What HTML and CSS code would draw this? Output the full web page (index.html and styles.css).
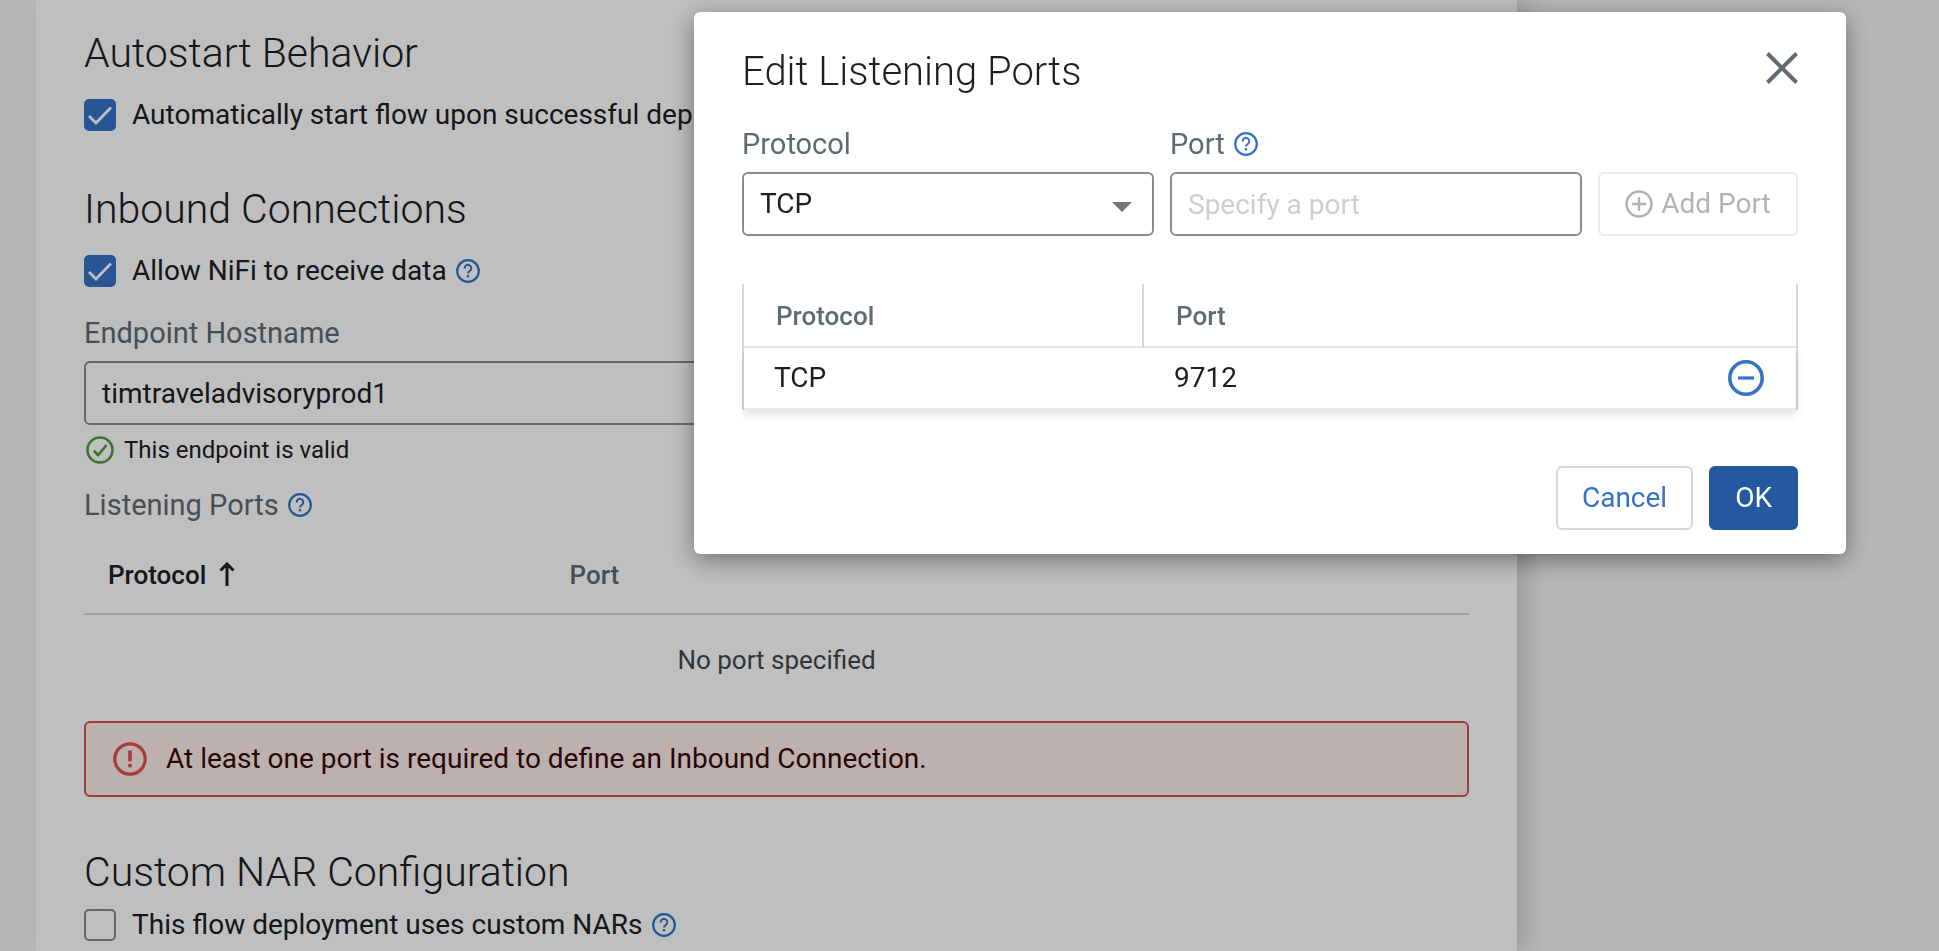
FILE: index.html
```html
<!DOCTYPE html>
<html lang="en">
<head>
<meta charset="utf-8">
<meta name="viewport" content="width=device-width, initial-scale=1">
<title>Edit Listening Ports</title>
<link rel="stylesheet" href="styles.css">
</head>
<body>
<svg class="sprite" width="0" height="0" aria-hidden="true">
  <symbol id="help" viewBox="0 0 24 24">
    <circle cx="12" cy="12" r="10.8" fill="none" stroke="currentColor" stroke-width="2.2"/>
    <path d="M8.700 9.600a3.300 3.300 0 1 1 5.300 2.200c-1.300 1-2 1.400-2 2.700" fill="none" stroke="currentColor" stroke-width="2"/>
    <circle cx="12" cy="17.300" r="1.300" fill="currentColor"/>
  </symbol>
  <symbol id="tick" viewBox="0 0 32 32">
    <path d="M5 17l7 7L27 8.500" fill="none" stroke="currentColor" stroke-width="2.800"/>
  </symbol>
</svg>

<main class="panel">
  <section class="section">
    <h2 class="heading">Autostart Behavior</h2>
    <label class="check">
      <span class="check-box"><input class="check-input" type="checkbox" checked><svg class="check-mark"><use href="#tick"/></svg></span>
      <span class="check-text">Automatically start flow upon successful deployment</span>
    </label>
  </section>

  <section class="section">
    <h2 class="heading">Inbound Connections</h2>
    <div class="line">
      <label class="check">
        <span class="check-box"><input class="check-input" type="checkbox" checked><svg class="check-mark"><use href="#tick"/></svg></span>
        <span class="check-text">Allow NiFi to receive data</span>
      </label>
      <svg class="help"><use href="#help"/></svg>
    </div>
    <div class="field endpoint">
      <label class="label" for="hostname">Endpoint Hostname</label>
      <input class="control" id="hostname" type="text" value="timtraveladvisoryprod1">
    </div>
    <p class="hint">
      <svg class="hint-icon" viewBox="0 0 28 28"><circle cx="14" cy="14" r="12.500" fill="none" stroke="currentColor" stroke-width="2.600"/><path d="M7.800 14.800l4.400 4.200L20.500 9" fill="none" stroke="currentColor" stroke-width="2.600"/></svg>
      <span>This endpoint is valid</span>
    </p>
    <div class="line">
      <span class="label">Listening Ports</span>
      <svg class="help"><use href="#help"/></svg>
    </div>
    <table class="ports">
      <thead>
        <tr>
          <th class="ports-head sorted" scope="col">Protocol<svg class="sort" viewBox="0 0 16 24"><path d="M8 24V2M1.500 8.500L8 2l6.500 6.500" fill="none" stroke="currentColor" stroke-width="3"/></svg></th>
          <th class="ports-head" scope="col">Port</th>
        </tr>
      </thead>
      <tbody>
        <tr><td class="ports-empty" colspan="2">No port specified</td></tr>
      </tbody>
    </table>
    <div class="alert" role="alert">
      <svg class="alert-icon" viewBox="0 0 34 34"><circle cx="17" cy="17" r="15.200" fill="none" stroke="currentColor" stroke-width="3.200"/><path d="M15.200 8.500h3.600v10.800h-3.600z" fill="currentColor"/><circle cx="17" cy="23.600" r="2.100" fill="currentColor"/></svg>
      <span>At least one port is required to define an Inbound Connection.</span>
    </div>
  </section>

  <section class="section section-nar">
    <h2 class="heading">Custom NAR Configuration</h2>
    <div class="line">
      <label class="check">
        <span class="check-box"><input class="check-input" type="checkbox"><svg class="check-mark"><use href="#tick"/></svg></span>
        <span class="check-text">This flow deployment uses custom NARs</span>
      </label>
      <svg class="help"><use href="#help"/></svg>
    </div>
  </section>
</main>

<div class="backdrop">
  <div class="dialog" role="dialog" aria-modal="true" aria-labelledby="dialog-title">
    <header class="dialog-head">
      <h1 class="heading" id="dialog-title">Edit Listening Ports</h1>
      <button class="close" type="button" aria-label="Close">
        <svg class="close-icon" viewBox="0 0 32 32"><path d="M1.500 1.500l29 29M30.500 1.500l-29 29" stroke="currentColor" stroke-width="4"/></svg>
      </button>
    </header>

    <form class="form">
      <div class="field">
        <label class="label" for="protocol">Protocol</label>
        <div class="select">
          <select class="control" id="protocol"><option>TCP</option><option>UDP</option></select>
          <svg class="caret" viewBox="0 0 20 10"><path d="M0 0h20L10 10z" fill="currentColor"/></svg>
        </div>
      </div>
      <div class="field">
        <div class="line">
          <label class="label" for="port">Port</label>
          <svg class="help"><use href="#help"/></svg>
        </div>
        <input class="control" id="port" type="text" placeholder="Specify a port">
      </div>
      <button class="button add" type="button" disabled>
        <svg class="add-icon" viewBox="0 0 28 28"><path d="M14 7v14M7 14h14" stroke="currentColor" stroke-width="2.400"/><circle cx="14" cy="14" r="12.500" fill="none" stroke="currentColor" stroke-width="2.600"/></svg>
        Add Port
      </button>
    </form>

    <table class="list">
      <thead>
        <tr>
          <th class="list-head" scope="col">Protocol</th>
          <th class="list-head" scope="col">Port</th>
        </tr>
      </thead>
      <tbody>
        <tr class="list-row">
          <td class="list-cell">TCP</td>
          <td class="list-cell">
            <div class="list-port">
              9712
              <button class="remove" type="button" aria-label="Remove port 9712">
                <svg class="remove-icon" viewBox="0 0 36 36"><circle cx="18" cy="18" r="16.200" fill="none" stroke="currentColor" stroke-width="3.600"/><path d="M10 18h16" stroke="currentColor" stroke-width="3.200"/></svg>
              </button>
            </div>
          </td>
        </tr>
      </tbody>
    </table>

    <footer class="dialog-foot">
      <button class="button cancel" type="button">Cancel</button>
      <button class="button ok" type="button">OK</button>
    </footer>
  </div>
</div>
</body>
</html>
```
FILE: styles.css
```css
* { box-sizing: border-box; }

:root {
  --text: #1b2025;
  --muted: #5f6a72;
  --blue: #3472c8;
  --outline: #868c92;
}

body {
  margin: 0;
  background: #f5f5f5;
  color: var(--text);
  font: 400 28px/32px Roboto, sans-serif;
}

svg { flex: none; display: block; }
.sprite { position: absolute; }
button, input, select { font: inherit; color: inherit; }

.panel {
  min-height: 100vh;
  margin: 0 422px 0 36px;
  padding: 29px 48px 8px;
  background: #fff;
  box-shadow: 12px 0 20px rgba(20, 30, 50, 0.16);
}

.section + .section { margin-top: 54px; }
.heading { margin: 0; font-size: 40px; line-height: 48px; font-weight: 300; }
.panel .heading { margin-bottom: 22px; font-size: 41px; }
.section-nar .heading,
.panel .section-nar .heading { margin-bottom: 13px; }
.section + .section-nar { margin-top: 51px; }

.line { display: flex; align-items: center; gap: 9px; }
.help { width: 24px; height: 24px; color: var(--blue); overflow: visible; }

.check { display: inline-flex; align-items: center; gap: 16px; vertical-align: top; }
.check-text { white-space: nowrap; }
.check-box { display: grid; }
.check-input, .check-mark { grid-area: 1 / 1; width: 32px; height: 32px; margin: 0; }
.check-input {
  appearance: none;
  border: 2px solid var(--outline);
  border-radius: 5px;
}
.check-input:checked { border-color: var(--blue); background: var(--blue); }
.check-mark { display: none; color: #fff; pointer-events: none; }
.check-input:checked + .check-mark { display: block; }

.field { display: flex; flex-direction: column; gap: 12px; }
.label { color: var(--muted); font-size: 29px; }
.control {
  width: 100%;
  height: 64px;
  padding: 0 16px;
  border: 2px solid var(--outline);
  border-radius: 6px;
  background: #fff;
  color: var(--text);
}
.control::placeholder { color: #cccfd2; opacity: 1; }
.endpoint { margin-top: 30px; }

.hint { display: flex; align-items: center; gap: 10px; margin: 9px 0 23px; padding-left: 2px; font-size: 24px; }
.hint-icon { width: 28px; height: 28px; color: #4d9c3c; }

.ports { width: 100%; margin: 16px 0; border-collapse: separate; border-spacing: 0; font-size: 26px; }
.ports-head {
  padding: 22px 24px;
  border-bottom: 2px solid #d6d8da;
  color: var(--muted);
  font-weight: 500;
  text-align: left;
}
.ports-head.sorted { width: 33.33%; color: var(--text); }
.sort { display: inline-block; width: 16px; height: 24px; margin-left: 13px; vertical-align: -2px; }
.ports-empty { padding: 29px 0; color: #3f474e; text-align: center; }

.alert {
  display: flex;
  align-items: center;
  gap: 19px;
  padding: 19px 27px;
  border: 2px solid #d9534b;
  border-radius: 6px;
  background: #fdeceb;
  color: #3a0808;
}
.alert-icon { width: 34px; height: 34px; color: #e0524b; }

.backdrop {
  position: fixed;
  inset: 0;
  display: flex;
  justify-content: flex-end;
  align-items: flex-start;
  padding: 12px 93px 12px 36px;
  background: rgba(0, 0, 0, 0.25);
}
.dialog {
  width: 100%;
  max-width: 1152px;
  padding: 36px 48px 24px;
  border-radius: 6px;
  background: #fff;
  box-shadow: 0 6px 24px rgba(0, 0, 0, 0.42);
}
.dialog-head { display: flex; justify-content: space-between; align-items: flex-start; margin-bottom: 32px; }
.close { padding: 4px 0; border: 0; background: none; color: var(--muted); }
.close-icon { width: 32px; height: 32px; }

.form { display: grid; grid-template-columns: 1fr 1fr 200px; align-items: end; gap: 16px; margin-bottom: 48px; }
.select { display: grid; align-items: center; }
.select .control, .caret { grid-area: 1 / 1; }
.select .control { appearance: none; }
.caret { justify-self: end; width: 20px; height: 10px; margin: 6px 22px 0 0; color: #757575; pointer-events: none; }

.button {
  display: inline-flex;
  align-items: center;
  justify-content: center;
  height: 64px;
  padding: 0 24px;
  border: 2px solid #d6d8da;
  border-radius: 6px;
  background: #fff;
}
.add { gap: 8px; border-color: #ebebeb; color: #afb3b7; }
.add-icon { width: 28px; height: 28px; }
.cancel { color: var(--blue); }
.ok { border-color: #2459a0; background: #2459a0; color: #fff; }

.list {
  width: 100%;
  margin-bottom: 56px;
  border: solid #d6d6d6;
  border-width: 0 2px;
  border-collapse: separate;
  border-spacing: 0;
}
.list-head {
  height: 64px;
  padding: 2px 32px 0;
  border-bottom: 2px solid #e8e8e8;
  color: var(--muted);
  font-size: 26px;
  font-weight: 500;
  text-align: left;
}
.list-head:first-child { width: 400px; border-right: 2px solid #d6d6d6; }
.list-row { box-shadow: 0 5px 8px rgba(0, 0, 0, 0.12); }
.list-cell { height: 62px; padding: 0 32px 0 30px; border-bottom: 2px solid #e8e8e8; }
.list-port { display: flex; align-items: center; justify-content: space-between; }
.remove { padding: 0; border: 0; background: none; color: var(--blue); }
.remove-icon { width: 36px; height: 36px; }

.dialog-foot { display: flex; justify-content: flex-end; gap: 16px; }
```
